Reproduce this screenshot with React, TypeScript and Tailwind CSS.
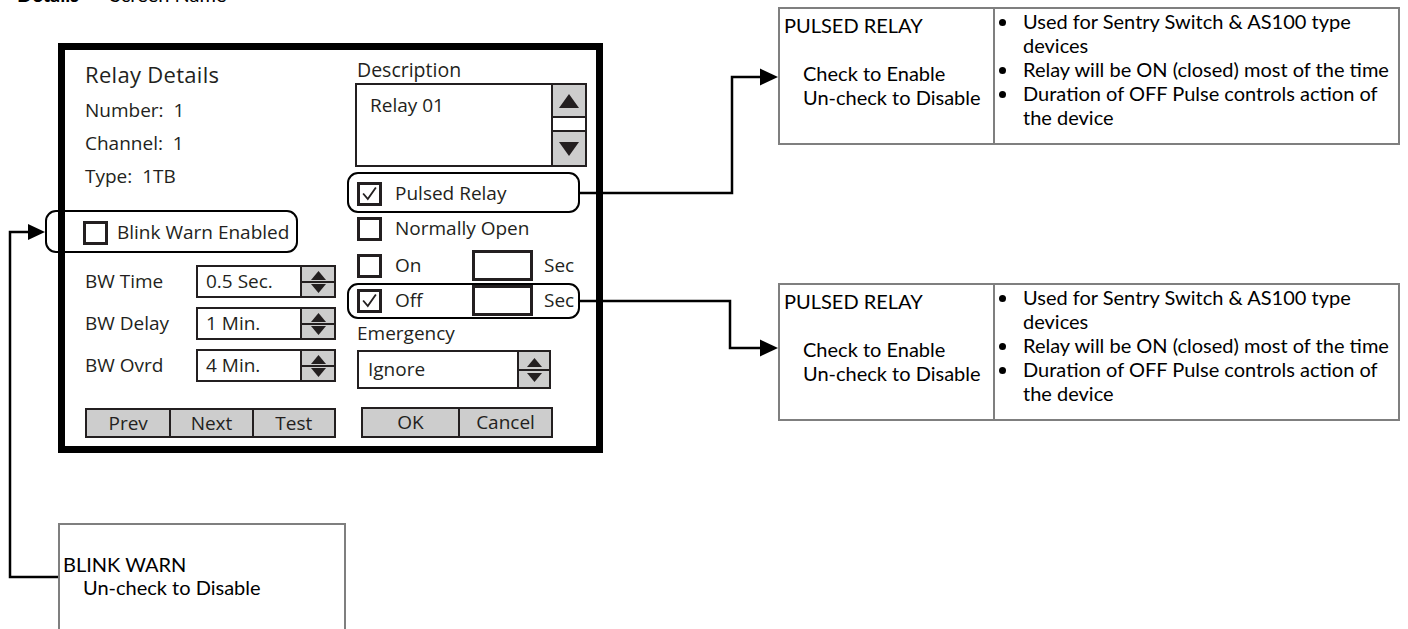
import type { ReactNode } from 'react';

const line = 'border-[#231f20]';

function Tri({ up, size = 'sm' }: { up?: boolean; size?: 'sm' | 'lg' }) {
  const cls = size === 'lg' ? 'h-[14px] w-[20px]' : 'h-[9px] w-[15px]';
  return (
    <svg viewBox="0 0 20 14" className={cls} preserveAspectRatio="none">
      <polygon points={up ? '10,0 20,14 0,14' : '0,0 20,0 10,14'} fill="#231f20" />
    </svg>
  );
}

function Checkbox({ checked }: { checked?: boolean }) {
  return (
    <span className={`flex h-[24px] w-[25px] shrink-0 items-center justify-center border-[3px] bg-white ${line}`}>
      {checked ? (
        <svg viewBox="0 0 20 20" className="h-[17px] w-[17px]">
          <path d="M2.5 10 L8 16.5 L17.5 3" fill="none" stroke="#231f20" strokeWidth="2.2" />
        </svg>
      ) : null}
    </span>
  );
}

function Spinner() {
  return (
    <div className={`flex w-[34px] shrink-0 flex-col border-2 border-l-0 bg-[#cdcdcd] ${line}`}>
      <div className={`flex flex-1 items-end justify-center border-b-2 pb-[1px] ${line}`}>
        <Tri up />
      </div>
      <div className="flex flex-1 items-start justify-center pt-[1px]">
        <Tri />
      </div>
    </div>
  );
}

function Outline({ className }: { className: string }) {
  return <span className={`pointer-events-none absolute rounded-[11px] border-2 border-black ${className}`} />;
}

const fields = [
  { label: 'BW Time', value: '0.5 Sec.' },
  { label: 'BW Delay', value: '1 Min.' },
  { label: 'BW Ovrd', value: '4 Min.' },
];

function LeftColumn() {
  return (
    <div className="flex w-[251px] flex-col pt-[7px]">
      <div className="flex h-[33px] items-center text-[22px] tracking-[0.3px]">Relay Details</div>
      <div className="mt-[4px] flex h-[33px] items-center">Number:&nbsp; 1</div>
      <div className="flex h-[33px] items-center">Channel:&nbsp; 1</div>
      <div className="flex h-[33px] items-center">Type:&nbsp; 1TB</div>

      <div className="relative mt-[23px] flex h-[33px] items-center">
        <Outline className="-left-[40px] right-[38px] -top-[6px] -bottom-[4px]" />
        <span className="-ml-[2px]">
          <Checkbox />
        </span>
        <span className="ml-[9px]">Blink Warn Enabled</span>
      </div>

      <div className="mt-[16px] flex flex-col gap-[9px]">
        {fields.map((f) => (
          <div key={f.label} className="flex h-[33px] items-stretch">
            <span className="flex w-[111px] items-center">{f.label}</span>
            <div className={`flex flex-1 items-center border-2 bg-white pl-[8px] ${line}`}>{f.value}</div>
            <Spinner />
          </div>
        ))}
      </div>

      <div className={`mt-[26px] grid h-[30px] grid-cols-3 border-2 bg-[#cdcdcd] ${line}`}>
        <span className="flex items-center justify-center">Prev</span>
        <span className={`flex items-center justify-center border-l-2 ${line}`}>Next</span>
        <span className={`flex items-center justify-center border-l-2 ${line}`}>Test</span>
      </div>
    </div>
  );
}

function CheckRow({ label, checked, sec, children }: { label: string; checked?: boolean; sec?: boolean; children?: ReactNode }) {
  return (
    <div className="relative flex h-[35px] items-center pl-[2px]">
      {children}
      <Checkbox checked={checked} />
      <span className={sec ? 'ml-[13px] w-[77px]' : 'ml-[13px]'}>{label}</span>
      {sec ? (
        <>
          <span className={`h-[31px] w-[61px] border-[3px] bg-white ${line}`} />
          <span className="ml-[11px]">Sec</span>
        </>
      ) : null}
    </div>
  );
}

function RightColumn() {
  return (
    <div className="ml-[19px] flex w-[232px] flex-col pt-[7px]">
      <div className="flex h-[26px] items-center pl-[2px] text-[19.5px]">Description</div>
      <div className={`flex h-[84px] border-2 bg-white ${line}`}>
        <div className="flex-1 pl-[13px] pt-[11px]">Relay 01</div>
        <div className={`flex w-[34px] flex-col border-l-2 ${line}`}>
          <div className={`flex h-[33px] items-center justify-center border-b-2 bg-[#cdcdcd] ${line}`}>
            <Tri up size="lg" />
          </div>
          <div className="h-[12px] bg-white" />
          <div className={`flex flex-1 items-center justify-center border-t-2 bg-[#cdcdcd] ${line}`}>
            <Tri size="lg" />
          </div>
        </div>
      </div>

      <div className="mt-[9px]">
        <CheckRow label="Pulsed Relay" checked>
          <Outline className="-left-[8px] right-[7px] -top-[4px] -bottom-[2px]" />
        </CheckRow>
      </div>
      <CheckRow label="Normally Open" />
      <div className="mt-[2px]">
        <CheckRow label="On" sec />
      </div>
      <CheckRow label="Off" checked sec>
        <Outline className="-left-[8px] right-[7px] top-0 -bottom-[1px]" />
      </CheckRow>

      <div className="flex h-[30px] items-center pl-[2px]">Emergency</div>
      <div className={`ml-[2px] mt-[2px] flex h-[39px] w-[194px] border-2 bg-white ${line}`}>
        <div className="flex flex-1 items-center pl-[9px]">Ignore</div>
        <div className={`flex w-[32px] flex-col border-l-2 bg-[#cdcdcd] ${line}`}>
          <div className={`flex flex-1 items-end justify-center border-b-2 pb-[2px] ${line}`}>
            <Tri up />
          </div>
          <div className="flex flex-1 items-start justify-center pt-[2px]">
            <Tri />
          </div>
        </div>
      </div>

      <div className={`ml-[6px] mt-[18px] flex h-[31px] w-[192px] border-2 bg-[#cdcdcd] ${line}`}>
        <span className="flex w-[95px] items-center justify-center">OK</span>
        <span className={`flex flex-1 items-center justify-center border-l-2 ${line}`}>Cancel</span>
      </div>
    </div>
  );
}

function Dialog() {
  return (
    <div className="absolute left-[58px] top-[43px] h-[410px] w-[545px] border-[7px] border-black bg-white font-['Open_Sans',sans-serif] text-[19px] leading-none text-[#231f20]">
      <div className="flex pl-[20px]">
        <LeftColumn />
        <RightColumn />
      </div>
    </div>
  );
}

const bullets = [
  ['Used for Sentry Switch & AS100 type', 'devices'],
  ['Relay will be ON (closed) most of the time'],
  ['Duration of OFF Pulse controls action of', 'the device'],
];

function PulsedCallout({ top }: { top: string }) {
  return (
    <div className={`absolute left-[778px] flex h-[138px] w-[622px] border-2 border-[#7f7f7f] bg-white ${top}`}>
      <div className="w-[215px] border-r-2 border-[#7f7f7f] pl-[4px] pt-[4px]">
        <p>PULSED RELAY</p>
        <p className="mt-[24px] pl-[19px]">Check to Enable</p>
        <p className="pl-[19px]">Un-check to Disable</p>
      </div>
      <ul className="flex-1">
        {bullets.map((b) => (
          <li key={b[0]} className="flex">
            <span className="flex w-[28px] shrink-0 justify-start pl-[4px] pt-[10px]">
              <span className="h-[7px] w-[7px] rounded-full bg-black" />
            </span>
            <span className="whitespace-nowrap">
              {b.map((t, i) => (
                <span key={i} className="block">
                  {t}
                </span>
              ))}
            </span>
          </li>
        ))}
      </ul>
    </div>
  );
}

export default function App() {
  return (
    <div className="relative h-[629px] w-[1408px] overflow-hidden bg-white font-['Lato',sans-serif] text-[20px] leading-[24px] text-black">
      <div className="absolute left-[17px] -top-[18px] flex whitespace-nowrap">
        <span className="w-[93px] font-bold">Details</span>
        <span>Screen Name</span>
      </div>

      <Dialog />

      <PulsedCallout top="top-[7px]" />
      <PulsedCallout top="top-[283px]" />

      <div className="absolute left-[58px] top-[523px] h-[130px] w-[288px] border-2 border-[#7f7f7f] bg-white pl-[3px] pt-[28px] leading-[23px]">
        <p>BLINK WARN</p>
        <p className="pl-[20px]">Un-check to Disable</p>
      </div>

      <svg className="pointer-events-none absolute inset-0" width="1408" height="629">
        <g fill="none" stroke="#000" strokeWidth="2.5">
          <polyline points="580,193 732,193 732,77 762,77" />
          <polyline points="580,301 730,301 730,348 762,348" />
          <polyline points="58,577 10,577 10,232 30,232" />
        </g>
        <g fill="#000">
          <polygon points="778,77 760,68.5 760,85.5" />
          <polygon points="778,348 760,339.5 760,356.5" />
          <polygon points="45,232 28,224 28,240" />
        </g>
      </svg>
    </div>
  );
}
